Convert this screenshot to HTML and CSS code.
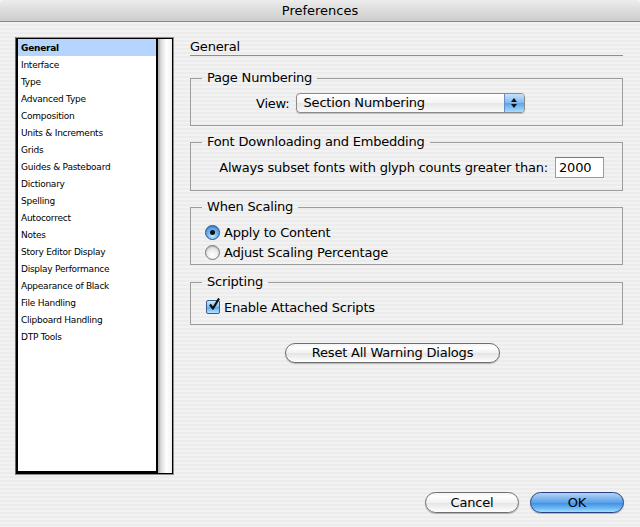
FILE: index.html
```html
<!DOCTYPE html>
<html>
<head>
<meta charset="utf-8">
<title>Preferences</title>
<link rel="stylesheet" href="styles.css">
</head>
<body>
<div class="window">
  <div class="titlebar">Preferences</div>
  <div class="body">
    <div class="sidebar">
      <ul class="list">
        <li class="selected">General</li>
        <li>Interface</li>
        <li>Type</li>
        <li>Advanced Type</li>
        <li>Composition</li>
        <li>Units &amp; Increments</li>
        <li>Grids</li>
        <li>Guides &amp; Pasteboard</li>
        <li>Dictionary</li>
        <li>Spelling</li>
        <li>Autocorrect</li>
        <li>Notes</li>
        <li>Story Editor Display</li>
        <li>Display Performance</li>
        <li>Appearance of Black</li>
        <li>File Handling</li>
        <li>Clipboard Handling</li>
        <li>DTP Tools</li>
      </ul>
      <div class="scrollbar"></div>
    </div>
    <div class="panel">
      <h1 class="heading">General</h1>
      <fieldset class="group group-page">
        <legend>Page Numbering</legend>
        <div class="view-row">
          <span class="label">View:</span>
          <div class="select">
            <span class="select-value">Section Numbering</span>
            <span class="stepper">
              <svg width="8" height="12" viewBox="0 0 8 12"><path d="M4 1 L7 5 L1 5 Z" fill="#111"/><path d="M1 7 L7 7 L4 11 Z" fill="#111"/></svg>
            </span>
          </div>
        </div>
      </fieldset>
      <fieldset class="group group-font">
        <legend>Font Downloading and Embedding</legend>
        <div class="subset-row">
          <span class="label">Always subset fonts with glyph counts greater than:</span>
          <span class="textfield">2000</span>
        </div>
      </fieldset>
      <fieldset class="group group-scaling">
        <legend>When Scaling</legend>
        <div class="option-row"><span class="radio radio-on"></span><span class="label">Apply to Content</span></div>
        <div class="option-row"><span class="radio"></span><span class="label">Adjust Scaling Percentage</span></div>
      </fieldset>
      <fieldset class="group group-scripting">
        <legend>Scripting</legend>
        <div class="option-row">
          <span class="checkbox"><svg width="14" height="14" viewBox="0 0 14 14"><path d="M3 6.5 L6 10.5 L12 0.5" fill="none" stroke="#111" stroke-width="2.2" stroke-linejoin="round"/></svg></span>
          <span class="label">Enable Attached Scripts</span>
        </div>
      </fieldset>
      <div class="reset-row">
        <button class="btn btn-reset">Reset All Warning Dialogs</button>
      </div>
    </div>
  </div>
  <div class="footer">
    <button class="btn btn-cancel">Cancel</button>
    <button class="btn btn-ok">OK</button>
  </div>
</div>
</body>
</html>
```
FILE: styles.css
```css
* { box-sizing: border-box; }
html, body { margin: 0; padding: 0; background: #f4f4f4; }
body {
  font-family: "DejaVu Sans", "Liberation Sans", sans-serif;
  font-size: 13px;
  letter-spacing: -0.2px;
  color: #000;
}
.window {
  width: 640px;
  height: 527px;
  display: flex;
  flex-direction: column;
  background: repeating-linear-gradient(to bottom, #ececec 0, #ececec 2px, #f2f2f2 2px, #f2f2f2 4px);
  border-radius: 5px 5px 0 0;
  overflow: hidden;
}
.titlebar {
  height: 22px;
  line-height: 21px;
  text-align: center;
  background: linear-gradient(to bottom, #ececec 0%, #dcdcdc 50%, #cdcdcd 100%);
  border-bottom: 1px solid #8a8a8a;
  font-size: 13px;
  letter-spacing: 0;
  flex: none;
}
.body {
  display: flex;
  padding: 15px 0 0 15px;
  flex: none;
}
.sidebar {
  width: 159px;
  height: 438px;
  display: flex;
  border: 1px solid #8c8c8c;
  border-left-color: #6a6a6a;
}
.list {
  list-style: none;
  margin: 0;
  padding: 0;
  width: 142px;
  background: #fff;
  border-left: 2px solid #000;
  border-top: 1px solid #000;
  border-bottom: 3px solid #000;
  border-right: 2px solid #000;
  font-size: 9px;
  letter-spacing: -0.25px;
}
.list li {
  height: 17px;
  line-height: 16px;
  padding-top: 1px;
  padding-left: 3px;
  white-space: nowrap;
}
.list li.selected {
  background: #b5d5ff;
  font-weight: bold;
}
.scrollbar {
  flex: 1;
  background: linear-gradient(to right, #a9a9a9 0%, #d8d8d8 20%, #f6f6f6 50%, #ffffff 65%, #eeeeee 100%);
  border-top: 1px solid #000;
  border-right: 1px solid #000;
  border-bottom: 1px solid #000;
}
.panel {
  width: 433px;
  margin-left: 16px;
  display: flex;
  flex-direction: column;
}
.heading {
  margin: 0;
  font-size: 13px;
  font-weight: normal;
  height: 19px;
  padding-top: 2px;
  line-height: 16px;
  border-bottom: 1px solid #8e8e8e;
}
.group {
  margin: 8px 0 0 0;
  padding: 0 0 0 14px;
  border: 1px solid #9c9c9c;
  min-width: 0;
}
.group legend {
  margin-left: -3px;
  padding: 0 5px;
  line-height: 16px;
  height: 16px;
}
.group-page { margin-top: 14px; padding-top: 7px; padding-bottom: 12px; }
.group-font { padding-top: 7px; padding-bottom: 12px; }
.group-scaling { padding-top: 7px; padding-bottom: 2px; }
.group-scripting { margin-top: 9px; padding-top: 7px; padding-bottom: 7px; }

.view-row {
  display: flex;
  align-items: center;
  gap: 6px;
  height: 20px;
  padding-left: 51px;
}
.select {
  width: 229px;
  height: 20px;
  display: flex;
  border: 1px solid #8a8a8a;
  border-radius: 4px;
  background: linear-gradient(to bottom, #ffffff 0%, #f4f4f4 50%, #e6e6e6 51%, #fafafa 100%);
  box-shadow: 0 1px 1px rgba(0,0,0,0.2);
  overflow: hidden;
}
.select-value {
  flex: 1;
  padding-left: 7px;
  line-height: 18px;
}
.stepper {
  width: 20px;
  display: flex;
  align-items: center;
  justify-content: center;
  border-left: 1px solid #6b8cc0;
  background: linear-gradient(to bottom, #c8e1fb 0%, #7fb8f1 50%, #5aa2ec 51%, #a9dcff 100%);
}
.subset-row {
  display: flex;
  align-items: center;
  justify-content: flex-end;
  gap: 7px;
  padding-right: 18px;
  height: 21px;
}
.textfield {
  width: 49px;
  height: 21px;
  border: 1px solid #9a9a9a;
  border-top-color: #7a7a7a;
  background: #fff;
  line-height: 19px;
  padding-left: 3px;
}
.option-row {
  display: flex;
  align-items: center;
  height: 20px;
  gap: 4px;
}
.radio {
  width: 15px;
  height: 15px;
  border-radius: 50%;
  border: 1px solid #777;
  background: radial-gradient(circle at 50% 70%, #ffffff 0%, #f0f0f0 40%, #c8c8c8 100%);
  box-shadow: inset 0 1px 1px rgba(0,0,0,0.15);
  position: relative;
}
.radio-on {
  border-color: #2f4f86;
  background: radial-gradient(circle at 50% 75%, #c8ecff 0%, #6db3f0 45%, #3b86d8 100%);
}
.radio-on::after {
  content: "";
  position: absolute;
  left: 4px;
  top: 4px;
  width: 5px;
  height: 5px;
  border-radius: 50%;
  background: #111;
}
.checkbox {
  width: 14px;
  height: 14px;
  border: 1px solid #3a5b8e;
  border-radius: 2px;
  background: linear-gradient(to bottom, #cfe8fc 0%, #7dbcf2 50%, #5ba6ec 51%, #b3e4ff 100%);
  position: relative;
  margin-left: 1px;
}
.checkbox svg {
  position: absolute;
  left: 0;
  top: -3px;
}
.reset-row {
  margin-top: 18px;
  padding-left: 95px;
}
.btn {
  font-family: "DejaVu Sans", "Liberation Sans", sans-serif;
  font-size: 13px;
  letter-spacing: -0.2px;
  color: #000;
  height: 20px;
  padding: 0;
  border: 1px solid #6e6e6e;
  border-radius: 10px;
  background: linear-gradient(to bottom, #f4f4f4 0%, #ffffff 20%, #f0f0f0 50%, #e4e4e4 51%, #f6f6f6 85%, #ffffff 100%);
  box-shadow: 0 1px 1px rgba(0,0,0,0.25);
  line-height: 18px;
}
.btn-reset { width: 215px; }
.footer {
  margin-top: auto;
  display: flex;
  justify-content: flex-end;
  gap: 11px;
  padding: 0 16px 14px 0;
}
.btn-cancel, .btn-ok { width: 94px; height: 21px; border-radius: 11px; }
.btn-ok {
  border-color: #2a3f7c;
  background: linear-gradient(to bottom, #b5d4f6 0%, #86baf0 25%, #5aa1ea 50%, #3d8ee5 51%, #6ab8f4 80%, #a4e0ff 100%);
}
```
